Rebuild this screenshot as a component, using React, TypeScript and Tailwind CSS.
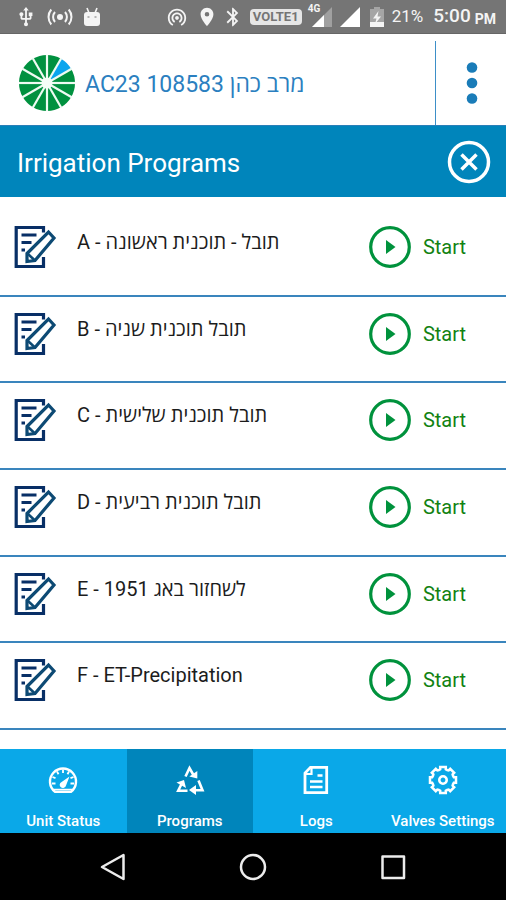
import { useState } from 'react'
import { MdBluetooth, MdLocationOn, MdUsb, MdWifiTethering } from 'react-icons/md'

interface IProgram {
  id: string
  name: string
}

const programs: IProgram[] = [
  { id: 'A', name: 'תובל - תוכנית ראשונה' },
  { id: 'B', name: 'תובל תוכנית שניה' },
  { id: 'C', name: 'תובל תוכנית שלישית' },
  { id: 'D', name: 'תובל תוכנית רביעית' },
  { id: 'E', name: 'לשחזור באג 1951' },
  { id: 'F', name: 'ET-Precipitation' },
]

const tabs = [
  { label: 'Unit Status', Icon: GaugeIcon },
  { label: 'Programs', Icon: CycleIcon },
  { label: 'Logs', Icon: LogsIcon },
  { label: 'Valves Settings', Icon: GearIcon },
]

function BroadcastIcon() {
  return (
    <svg viewBox="0 0 26 22" className="h-[22px] w-[26px]" fill="none" stroke="currentColor" strokeWidth="2">
      <circle cx="13" cy="11" r="3" fill="currentColor" stroke="none" />
      <path d="M8 6a7.500 7.500 0 0 0 0 10M4.300 3.500a11.500 11.500 0 0 0 0 15" />
      <path d="M18 6a7.500 7.500 0 0 1 0 10M21.700 3.500a11.500 11.500 0 0 1 0 15" />
    </svg>
  )
}

function RobotIcon() {
  return (
    <svg viewBox="0 0 18 20" className="h-5 w-[18px]">
      <path d="M4 1l2 5M14 1l-2 5" stroke="currentColor" strokeWidth="1.600" />
      <path d="M1 8q0-3 3-3h10q3 0 3 3v8q0 3-3 3H4q-3 0-3-3z" fill="currentColor" />
      <path d="M4.500 10h2M11.500 10h2" stroke="#757575" strokeWidth="1.200" />
    </svg>
  )
}

function BatteryIcon() {
  return (
    <svg viewBox="0 0 14 20" className="h-5 w-3.5">
      <path d="M0 2h4V0h6v2h4v14H0z" fill="#a5a5a5" />
      <path d="M0 15h14v5H0z" fill="currentColor" />
      <path d="M8.500 4L3 11.500h3.500L5 17l6-7.500H7.500z" fill="currentColor" />
    </svg>
  )
}

function StatusBar() {
  return (
    <div className="flex h-[34px] items-center border-b border-[#666] bg-[#757575] pr-2.5 pl-[15px] text-[#f4f4f4]">
      <MdUsb className="size-[22px]" />
      <div className="ml-2.5">
        <BroadcastIcon />
      </div>
      <div className="ml-2.5">
        <RobotIcon />
      </div>
      <div className="ml-auto flex items-center">
        <MdWifiTethering className="size-[22px]" />
        <MdLocationOn className="ml-2 size-[22px]" />
        <MdBluetooth className="ml-1 size-[22px]" />
        <span className="ml-1.5 flex h-4 w-[52px] items-center justify-center rounded-sm bg-[#e6e6e6] text-[13px] font-bold text-[#757575]">
          VOLTE1
        </span>
        <div className="relative ml-2.5 h-5 w-5">
          <svg viewBox="0 0 20 20" className="size-5">
            <path d="M20 0v20H0z" fill="#a0a0a0" />
            <path d="M12 8v12H0z" fill="#fff" />
          </svg>
          <span className="absolute -top-1 -left-1 text-[10px] leading-3 font-bold">4G</span>
        </div>
        <svg viewBox="0 0 20 20" className="ml-2 size-5">
          <path d="M20 0v20H0z" fill="#fff" />
        </svg>
        <div className="ml-2.5">
          <BatteryIcon />
        </div>
        <span className="ml-2 text-[17px]">21%</span>
        <span className="ml-2.5 text-[19px] font-medium">5:00</span>
        <span className="ml-1 pt-1 text-sm font-bold">PM</span>
      </div>
    </div>
  )
}

function Logo() {
  const slices = Array.from({ length: 12 }, (_, i) => i * 30)
  return (
    <svg viewBox="-28 -28 56 56" className="size-14">
      {slices.map((angle) => (
        <path
          key={angle}
          d="M0 0V-28A28 28 0 0 1 14 -24.250z"
          transform={`rotate(${angle})`}
          fill={angle === 30 ? '#0aa5ee' : '#00913f'}
        />
      ))}
      {slices.map((angle) => (
        <path key={angle} d="M0 0V-28.500" transform={`rotate(${angle})`} stroke="#eefbf2" strokeWidth="2.200" />
      ))}
      <circle r="5.500" fill="#f4fdf7" />
    </svg>
  )
}

function EditIcon() {
  return (
    <svg viewBox="0 1 43 42" className="h-[42px] w-[43px]" fill="none" strokeWidth="3.200">
      <path d="M29.500 7.500V2.500H2.200v39h27.300V32" stroke="#082f66" />
      <path d="M7.500 10h15M7.500 17.500h10M7.500 25h3.500" stroke="#082f66" />
      <path d="M13 36.500v-8L34.500 7l5.500 6L21 35.500z" stroke="#0d4a74" />
      <path d="M14 29l7 6.500" stroke="#0d4a74" strokeWidth="2.500" />
    </svg>
  )
}

function PlayIcon() {
  return (
    <svg viewBox="0 0 42 42" className="size-[42px]">
      <circle cx="21" cy="21" r="19.300" fill="none" stroke="#00923c" strokeWidth="3.200" />
      <path d="M17 14l9.500 7-9.500 7z" fill="#00923c" />
    </svg>
  )
}

function CloseIcon() {
  return (
    <svg viewBox="0 0 44 44" className="size-11" fill="none" stroke="currentColor" strokeWidth="3.500">
      <circle cx="22" cy="22" r="19.500" />
      <path d="M14.500 14.500l15 15M29.500 14.500l-15 15" />
    </svg>
  )
}

function GaugeIcon() {
  return (
    <svg viewBox="0 0 30 30" className="size-[30px]" fill="none" stroke="currentColor" strokeWidth="2">
      <path d="M7 26.800h16A13 13 0 1 0 7 26.800z" strokeWidth="2.400" />
      <path
        d="M15 4.500v3.500M9 6.500l1.500 2.700M21 6.500l-1.500 2.700M4.500 12l3 1.200M25.500 12l-3 1.200M4 18.500h3.500M26 18.500h-3.500"
        strokeWidth="1.800"
      />
      <path d="M21.500 11.500l-3.500 9a3.200 3.200 0 1 1-4.400-3.600z" fill="currentColor" stroke="none" />
      <path d="M5.500 24.500h19" strokeWidth="1.500" />
    </svg>
  )
}

function CycleIcon() {
  return (
    <svg viewBox="0 0 30 30" className="size-[30px]" fill="none" stroke="currentColor" strokeWidth="2.600">
      <path d="M10.500 11.500L14.500 3l4.500 8" />
      <path d="M22.300 6v7.500l-8-2z" fill="currentColor" stroke="none" />
      <path d="M23.500 15.500l4 9.800H20" />
      <path d="M21 20v10l-7-5z" fill="currentColor" stroke="none" />
      <path d="M12.500 25.700H3.200L7 18" />
      <path d="M1.500 17.500l7.500-2.500 2 8z" fill="currentColor" stroke="none" />
    </svg>
  )
}

function LogsIcon() {
  return (
    <svg viewBox="0 0 30 30" className="size-[30px]" fill="none" stroke="currentColor" strokeWidth="2.800">
      <path d="M9.500 2.300h16.200v25.400H4V8z" />
      <path d="M10.500 2.500v6.500H4.500" strokeWidth="2.200" />
      <path d="M16.500 10.500h5M9 16.500h12.500M9 22h12.500" strokeWidth="2.600" />
    </svg>
  )
}

function GearIcon() {
  const teeth = [0, 45, 90, 135, 180, 225, 270, 315]
  return (
    <svg viewBox="-15 -15 30 30" className="size-[30px]" fill="none" stroke="currentColor" strokeWidth="2.500">
      {teeth.map((angle) => (
        <path key={angle} d="M-4.300 -9.900L-2.800 -10.800V-13H2.800V-10.800L4.300 -9.900" transform={`rotate(${angle})`} />
      ))}
      <circle r="3.700" strokeWidth="2.600" />
    </svg>
  )
}

function Header() {
  return (
    <header className="flex h-[92px] items-end border-b border-b-[#2a7fb8] bg-white text-[#2b7fc0]">
      <div className="flex h-[84px] flex-1 items-center pl-[19px]">
        <Logo />
        <h1 className="ml-2.5 pt-1 text-[23px] leading-7">AC23 108583 מרב כהן</h1>
      </div>
      <div className="h-[84px] w-px bg-[#3d8fc8]" />
      <button aria-label="Menu" className="flex h-[84px] w-[70px] items-center justify-center pl-0.5">
        <svg viewBox="0 0 12 42" className="h-[42px] w-3" fill="#1a7cb8">
          <circle cx="6" cy="5.500" r="5.300" />
          <circle cx="6" cy="21" r="5.300" />
          <circle cx="6" cy="36.500" r="5.300" />
        </svg>
      </button>
    </header>
  )
}

function ProgramRow({ program }: { program: IProgram }) {
  return (
    <li className="flex flex-1 items-start border-b-2 border-[#3a85bd] pt-4 pr-10 pl-3.5">
      <button aria-label={`Edit program ${program.id}`}>
        <EditIcon />
      </button>
      <p className="ml-5 flex-1 pt-1 text-xl leading-6 text-[#1c1c1c]">
        {program.id} - {program.name}
      </p>
      <button className="flex items-center gap-3 text-xl text-[#128212]">
        <PlayIcon />
        Start
      </button>
    </li>
  )
}

export default function App() {
  const [activeTab, setActiveTab] = useState('Programs')

  return (
    <div className="flex min-h-screen flex-col bg-white font-[Roboto,'Open_Sans','Noto_Sans',sans-serif]">
      <StatusBar />
      <Header />
      <div className="flex h-[71px] items-center justify-between bg-[#0085bb] pr-[15px] pl-[17px] text-white">
        <h2 className="pt-1 text-[26px]">Irrigation Programs</h2>
        <button aria-label="Close">
          <CloseIcon />
        </button>
      </div>

      <ul className="flex flex-1 flex-col pt-[13px] pb-[19px]">
        {programs.map((program) => (
          <ProgramRow key={program.id} program={program} />
        ))}
      </ul>

      <nav className="grid h-[84px] grid-cols-4 text-white">
        {tabs.map(({ label, Icon }) => (
          <button
            key={label}
            onClick={() => setActiveTab(label)}
            className={`flex flex-col items-center justify-between pt-4 text-[15px] leading-6 font-medium whitespace-nowrap ${
              activeTab === label ? 'bg-[#0085bb]' : 'bg-[#0aa8e8]'
            }`}
          >
            <Icon />
            {label}
          </button>
        ))}
      </nav>

      <div className="flex h-[67px] items-center justify-center gap-28 bg-black text-[#ececec]">
        <button aria-label="Back">
          <svg viewBox="0 0 28 28" className="size-7" fill="none" stroke="currentColor" strokeWidth="2.500" strokeLinejoin="round">
            <path d="M24.500 2v24L3 14z" />
          </svg>
        </button>
        <button aria-label="Home">
          <svg viewBox="0 0 28 28" className="size-7" fill="none" stroke="currentColor" strokeWidth="2.500">
            <circle cx="14" cy="14" r="12" />
          </svg>
        </button>
        <button aria-label="Recent apps">
          <svg viewBox="0 0 28 28" className="size-7" fill="none" stroke="currentColor" strokeWidth="2.500" strokeLinejoin="round">
            <path d="M3.500 3.500h21.500v21.500H3.500z" />
          </svg>
        </button>
      </div>
    </div>
  )
}
